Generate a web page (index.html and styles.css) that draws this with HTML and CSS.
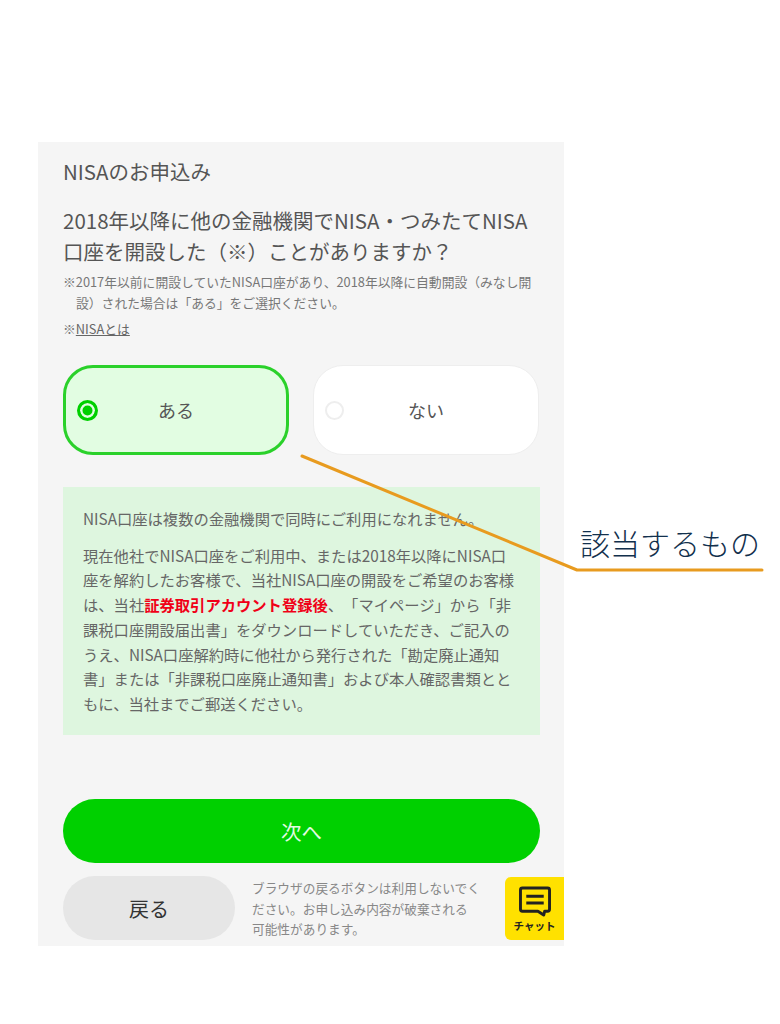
FILE: index.html
```html
<!DOCTYPE html>
<html lang="ja">
<head>
    <meta charset="UTF-8">
    <meta name="viewport" content="width=device-width, initial-scale=1.0">
    <title>NISAのお申込み</title>
    <link rel="stylesheet" href="styles.css">
</head>
<body>
    <div class="panel">
        <div class="page-title">NISAのお申込み</div>
        <h1 class="question">2018年以降に他の金融機関でNISA・つみたてNISA口座を開設した（※）ことがありますか？</h1>
        <p class="note">※2017年以前に開設していたNISA口座があり、2018年以降に自動開設（みなし開設）された場合は「ある」をご選択ください。</p>
        <p class="note-link">※<a href="#">NISAとは</a></p>

        <div class="choices">
            <div class="choice selected">
                <span class="radio"></span>
                <span class="choice-label">ある</span>
            </div>
            <div class="choice">
                <span class="radio"></span>
                <span class="choice-label">ない</span>
            </div>
        </div>

        <div class="info">
            <p>NISA口座は複数の金融機関で同時にご利用になれません。</p>
            <p>現在他社でNISA口座をご利用中、または2018年以降にNISA口座を解約したお客様で、当社NISA口座の開設をご希望のお客様は、当社<strong>証券取引アカウント登録後</strong>、「マイページ」から「非課税口座開設届出書」をダウンロードしていただき、ご記入のうえ、NISA口座解約時に他社から発行された「勘定廃止通知書」または「非課税口座廃止通知書」および本人確認書類とともに、当社までご郵送ください。</p>
        </div>

        <button class="btn-next">次へ</button>

        <div class="footer-row">
            <button class="btn-back">戻る</button>
            <p class="warning">ブラウザの戻るボタンは利用しないでください。お申し込み内容が破棄される<br>可能性があります。</p>
            <div class="chat">
                <svg class="chat-icon" viewBox="0 0 34 32" width="34" height="31">
                    <path d="M4 2h26a2 2 0 0 1 2 2v20a2 2 0 0 1-2 2h-3l-1 4-6-4H4a2 2 0 0 1-2-2V4a2 2 0 0 1 2-2z" fill="none" stroke="#222" stroke-width="3" stroke-linejoin="round"/>
                    <path d="M8 10.5h18M8 17.5h18" stroke="#222" stroke-width="3"/>
                </svg>
                <span class="chat-label">チャット</span>
            </div>
        </div>
    </div>

    <!-- annotation drawn over the screenshot -->
    <svg class="callout-line" viewBox="0 0 780 1024" width="780" height="1024">
        <path d="M302 456L577 570H762" fill="none" stroke="#e89b1f" stroke-width="3" stroke-linecap="round" stroke-linejoin="round"/>
    </svg>
    <div class="callout-text">該当するもの</div>
</body>
</html>
```

FILE: styles.css
```css
* {
    box-sizing: border-box;
}
body {
    margin: 0;
    padding: 142px 0 0 38px;
    background: #fff;
    font-family: "Noto Sans CJK JP", "Noto Sans", sans-serif;
    color: #555;
    text-spacing-trim: space-all;
}
.panel {
    width: 526px;
    height: 804px;
    padding: 15px 24px 0 25px;
    background: #f5f5f5;
}
.page-title {
    font-size: 20.5px;
    line-height: 28px;
}
.question {
    margin: 20px 0 0;
    font-size: 20.5px;
    font-weight: 400;
    line-height: 31px;
}
.note {
    margin: 4px 0 0;
    padding-left: 13px;
    text-indent: -13px;
    font-size: 12.8px;
    line-height: 21px;
    color: #777;
}
.note-link {
    margin: 5px 0 0;
    font-size: 12.8px;
    line-height: 21px;
    color: #777;
}
.note-link a {
    color: #666;
}
.choices {
    display: flex;
    gap: 24px;
    margin-top: 26px;
}
.choice {
    position: relative;
    display: flex;
    align-items: center;
    justify-content: center;
    width: 226px;
    height: 90px;
    border: 1px solid #eee;
    border-radius: 30px;
    background: #fff;
    font-size: 18px;
}
.choice.selected {
    border: 3px solid #2ad12a;
    background: #e2fde2;
}
.radio {
    position: absolute;
    left: 11px;
    top: 50%;
    width: 19px;
    height: 19px;
    margin-top: -9.5px;
    border: 2px solid #eee;
    border-radius: 50%;
    background: #fff;
}
.selected .radio {
    left: 11px;
    width: 21px;
    height: 21px;
    margin-top: -10.5px;
    border: 3px solid #00d000;
    background: #00d000;
    box-shadow: inset 0 0 0 2.5px #e2fde2;
}
.info {
    width: 477px;
    height: 248px;
    margin-top: 32px;
    padding: 19px 20px 0;
    background: #def6df;
    font-size: 15.3px;
    line-height: 24.7px;
    color: #666;
}
.info p {
    margin: 0 0 12px;
}
.info strong {
    color: #f00017;
    font-weight: 700;
}
button {
    border: none;
    font-family: inherit;
}
.btn-next {
    display: block;
    width: 477px;
    height: 64px;
    margin-top: 64px;
    border-radius: 32px;
    background: #00d000;
    color: #e4fbe4;
    font-size: 20.5px;
}
.footer-row {
    display: flex;
    align-items: flex-start;
    margin: 13px -24px 0 0;
}
.btn-back {
    flex: none;
    width: 172px;
    height: 64px;
    border-radius: 32px;
    background: #e6e6e6;
    color: #333;
    font-size: 20px;
}
.warning {
    flex: none;
    width: 236px;
    margin: 2px 0 0 17px;
    font-size: 12.7px;
    line-height: 20.5px;
    color: #888;
}
.chat {
    display: flex;
    flex-direction: column;
    align-items: center;
    width: 60px;
    height: 63px;
    margin: 1px 0 0 17px;
    padding-top: 9px;
    border-radius: 6px 0 0 6px;
    background: #ffe100;
}
.chat-icon {
    display: block;
}
.chat-label {
    margin-top: 1px;
    font-size: 10.5px;
    line-height: 16px;
    font-weight: 700;
    color: #222;
}
.callout-line {
    position: absolute;
    top: 0;
    left: 0;
    pointer-events: none;
}
.callout-text {
    position: absolute;
    top: 520px;
    left: 580px;
    font-size: 30px;
    font-weight: 300;
    line-height: 44px;
    white-space: nowrap;
    color: #12304d;
}
```
